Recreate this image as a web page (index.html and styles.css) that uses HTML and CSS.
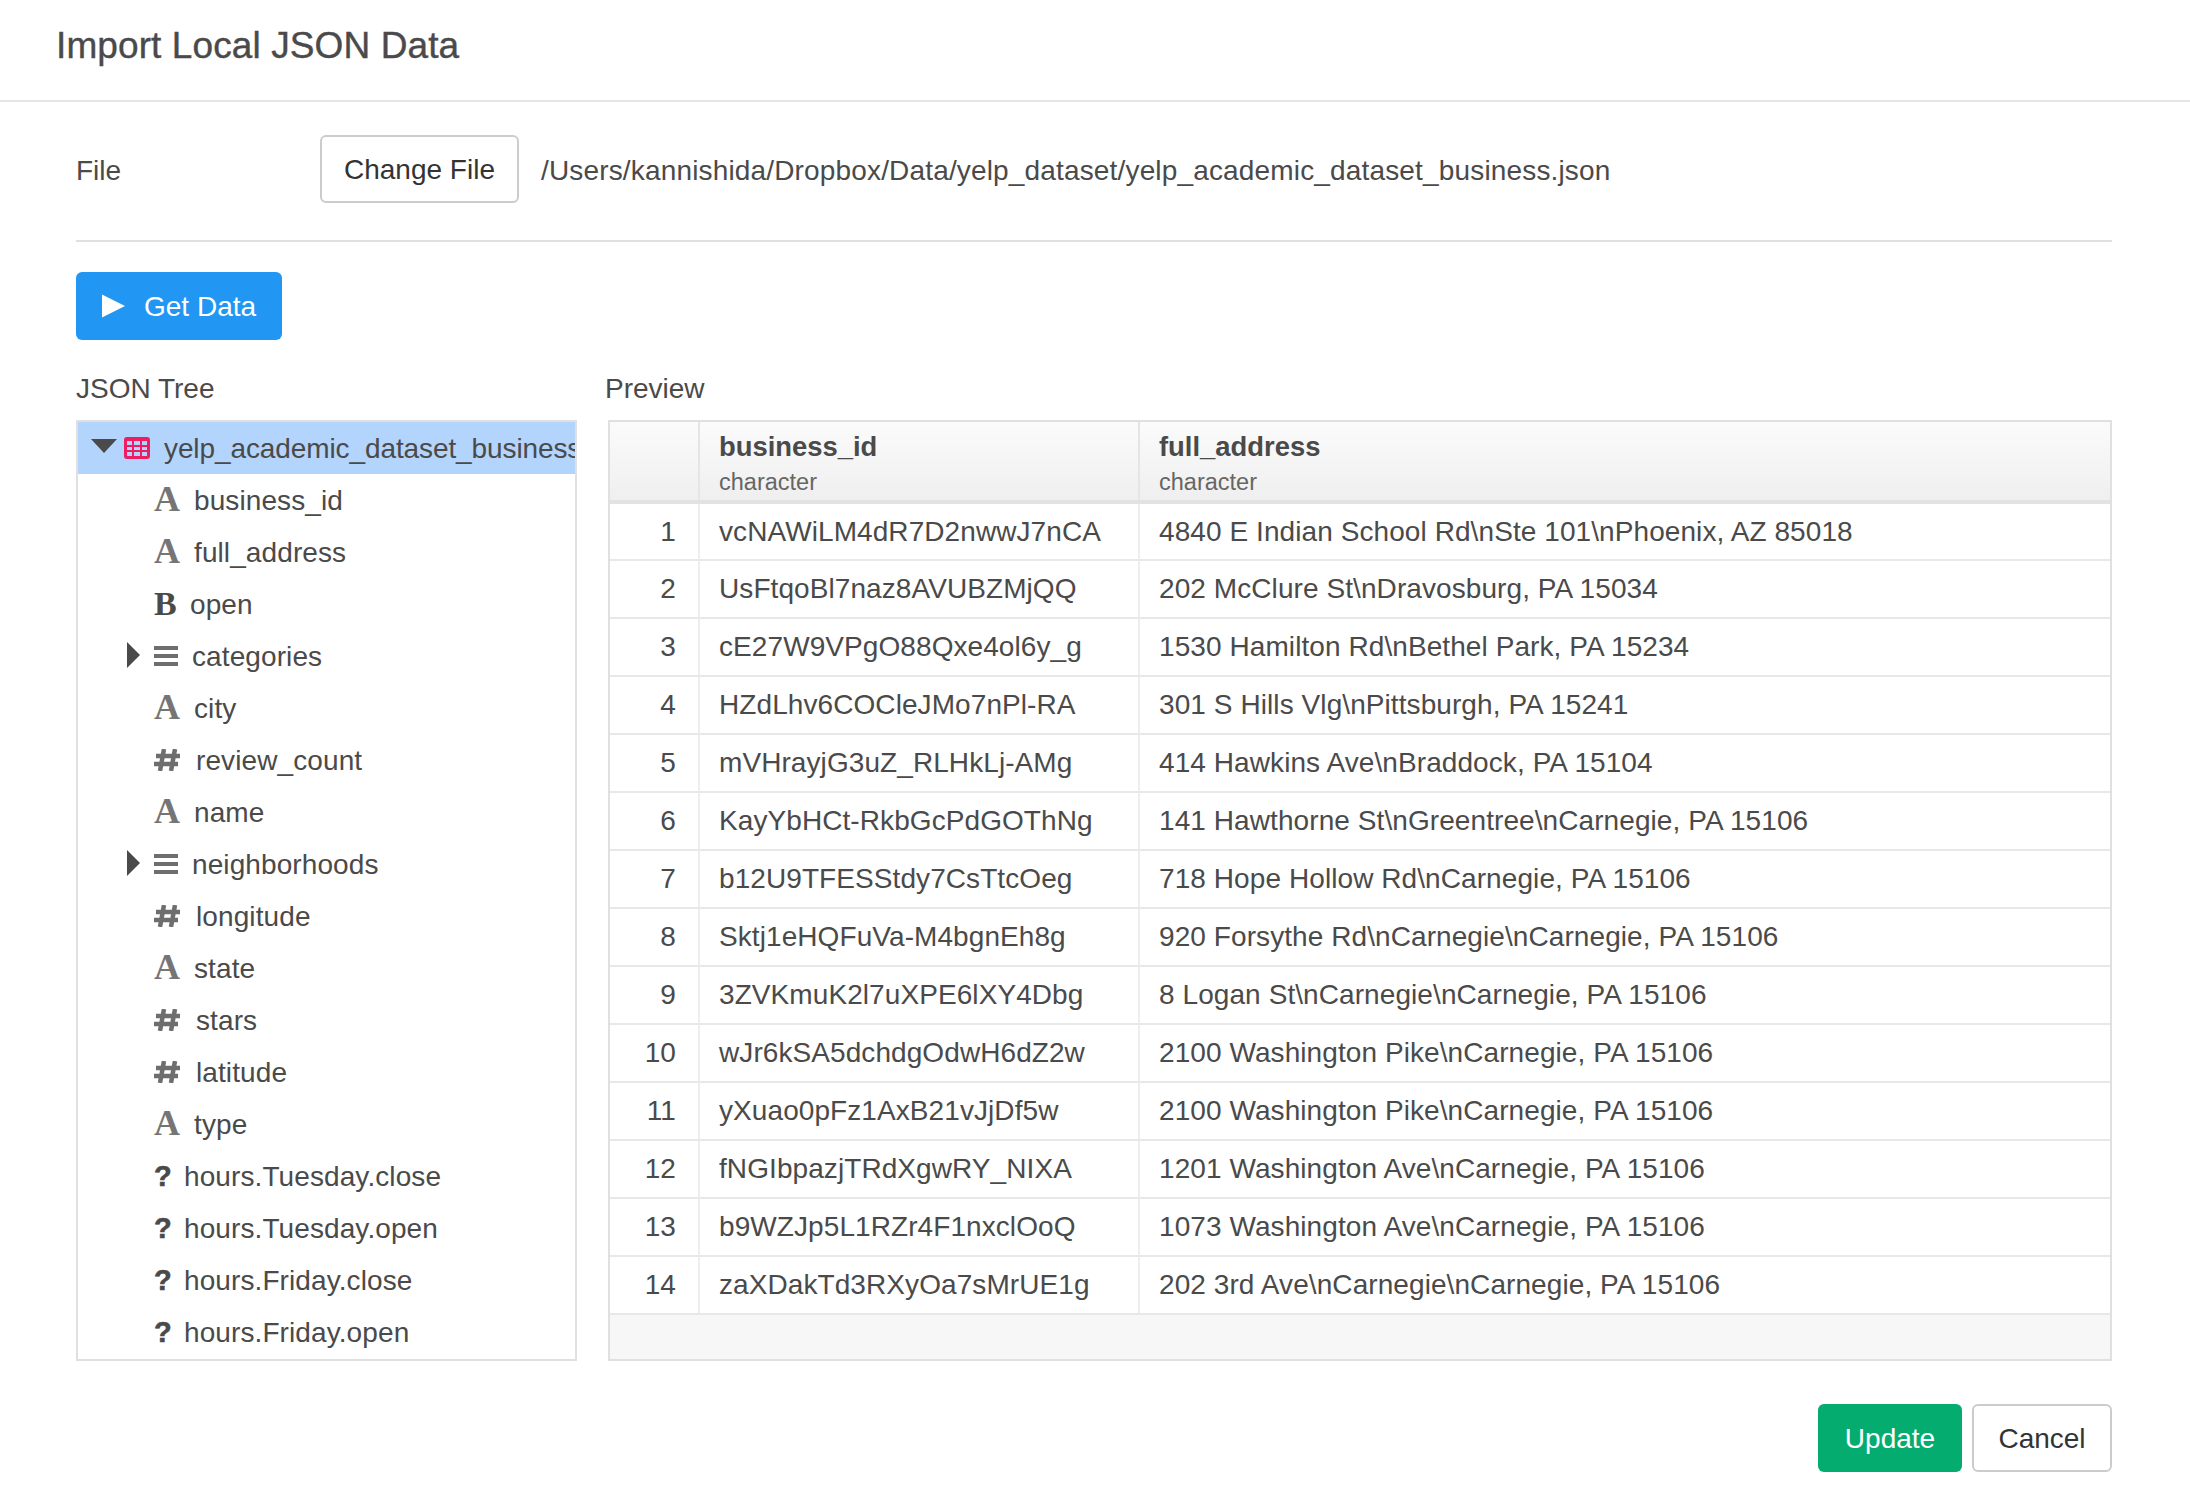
FILE: index.html
```html
<!DOCTYPE html>
<html lang="en">
<head>
<meta charset="utf-8">
<title>Import Local JSON Data</title>
<link rel="stylesheet" href="styles.css">
</head>
<body>
<header class="header"><h1 class="title">Import Local JSON Data</h1></header>
<main class="main">
  <section class="file-row">
    <span class="file-label">File</span>
    <button class="btn btn-default btn-file">Change File</button>
    <span class="file-path">/Users/kannishida/Dropbox/Data/yelp_dataset/yelp_academic_dataset_business.json</span>
  </section>
  <button class="btn btn-blue"><svg class="play" viewBox="0 0 24 24"><path d="M0 0L24 12L0 24Z"/></svg>Get Data</button>
  <section class="panes">
    <div class="tree-pane">
      <div class="pane-label">JSON Tree</div>
      <div class="tree">
        <div class="node node-root">
          <svg class="tri-down" viewBox="0 0 26 14"><path d="M0 0H26L13 14Z"/></svg>
          <svg class="table-icon" viewBox="0 0 26 22"><path fill-rule="evenodd" fill="#ee1c60" d="M3 0H23A3 3 0 0 1 26 3V19A3 3 0 0 1 23 22H3A3 3 0 0 1 0 19V3A3 3 0 0 1 3 0ZM3 4H8V8H3ZM10 4H16V8H10ZM18 4H23V8H18ZM3 10H8V13H3ZM10 10H16V13H10ZM18 10H23V13H18ZM3 15H8V19H3ZM10 15H16V19H10ZM18 15H23V19H18Z"/></svg>
          <span>yelp_academic_dataset_business</span>
        </div>
        <div class="node"><i class="ic ic-a">A</i><span>business_id</span></div>
        <div class="node"><i class="ic ic-a">A</i><span>full_address</span></div>
        <div class="node"><i class="ic ic-b">B</i><span>open</span></div>
        <div class="node node-parent"><svg class="tri-right" viewBox="0 0 13 26"><path d="M0 0L13 13L0 26Z"/></svg><svg class="list-icon" viewBox="0 0 24 20"><path d="M0 0H24V4H0ZM0 8H24V12H0ZM0 16H24V20H0Z"/></svg><span>categories</span></div>
        <div class="node"><i class="ic ic-a">A</i><span>city</span></div>
        <div class="node"><svg class="hash-icon" viewBox="0 0 26 22"><path d="M10 0L6 22M21 0L17 22M2 7H26M0 15H24"/></svg><span>review_count</span></div>
        <div class="node"><i class="ic ic-a">A</i><span>name</span></div>
        <div class="node node-parent"><svg class="tri-right" viewBox="0 0 13 26"><path d="M0 0L13 13L0 26Z"/></svg><svg class="list-icon" viewBox="0 0 24 20"><path d="M0 0H24V4H0ZM0 8H24V12H0ZM0 16H24V20H0Z"/></svg><span>neighborhoods</span></div>
        <div class="node"><svg class="hash-icon" viewBox="0 0 26 22"><path d="M10 0L6 22M21 0L17 22M2 7H26M0 15H24"/></svg><span>longitude</span></div>
        <div class="node"><i class="ic ic-a">A</i><span>state</span></div>
        <div class="node"><svg class="hash-icon" viewBox="0 0 26 22"><path d="M10 0L6 22M21 0L17 22M2 7H26M0 15H24"/></svg><span>stars</span></div>
        <div class="node"><svg class="hash-icon" viewBox="0 0 26 22"><path d="M10 0L6 22M21 0L17 22M2 7H26M0 15H24"/></svg><span>latitude</span></div>
        <div class="node"><i class="ic ic-a">A</i><span>type</span></div>
        <div class="node"><i class="ic ic-q">?</i><span>hours.Tuesday.close</span></div>
        <div class="node"><i class="ic ic-q">?</i><span>hours.Tuesday.open</span></div>
        <div class="node"><i class="ic ic-q">?</i><span>hours.Friday.close</span></div>
        <div class="node"><i class="ic ic-q">?</i><span>hours.Friday.open</span></div>
      </div>
    </div>
    <div class="preview-pane">
      <div class="pane-label">Preview</div>
      <div class="preview">
        <table class="grid">
          <colgroup><col class="c-num"><col class="c-id"><col></colgroup>
          <thead><tr><th></th><th><b>business_id</b><small>character</small></th><th><b>full_address</b><small>character</small></th></tr></thead>
          <tbody>
            <tr><td>1</td><td>vcNAWiLM4dR7D2nwwJ7nCA</td><td>4840 E Indian School Rd\nSte 101\nPhoenix, AZ 85018</td></tr>
            <tr><td>2</td><td>UsFtqoBl7naz8AVUBZMjQQ</td><td>202 McClure St\nDravosburg, PA 15034</td></tr>
            <tr><td>3</td><td>cE27W9VPgO88Qxe4ol6y_g</td><td>1530 Hamilton Rd\nBethel Park, PA 15234</td></tr>
            <tr><td>4</td><td>HZdLhv6COCleJMo7nPl-RA</td><td>301 S Hills Vlg\nPittsburgh, PA 15241</td></tr>
            <tr><td>5</td><td>mVHrayjG3uZ_RLHkLj-AMg</td><td>414 Hawkins Ave\nBraddock, PA 15104</td></tr>
            <tr><td>6</td><td>KayYbHCt-RkbGcPdGOThNg</td><td>141 Hawthorne St\nGreentree\nCarnegie, PA 15106</td></tr>
            <tr><td>7</td><td>b12U9TFESStdy7CsTtcOeg</td><td>718 Hope Hollow Rd\nCarnegie, PA 15106</td></tr>
            <tr><td>8</td><td>Sktj1eHQFuVa-M4bgnEh8g</td><td>920 Forsythe Rd\nCarnegie\nCarnegie, PA 15106</td></tr>
            <tr><td>9</td><td>3ZVKmuK2l7uXPE6lXY4Dbg</td><td>8 Logan St\nCarnegie\nCarnegie, PA 15106</td></tr>
            <tr><td>10</td><td>wJr6kSA5dchdgOdwH6dZ2w</td><td>2100 Washington Pike\nCarnegie, PA 15106</td></tr>
            <tr><td>11</td><td>yXuao0pFz1AxB21vJjDf5w</td><td>2100 Washington Pike\nCarnegie, PA 15106</td></tr>
            <tr><td>12</td><td>fNGIbpazjTRdXgwRY_NIXA</td><td>1201 Washington Ave\nCarnegie, PA 15106</td></tr>
            <tr><td>13</td><td>b9WZJp5L1RZr4F1nxclOoQ</td><td>1073 Washington Ave\nCarnegie, PA 15106</td></tr>
            <tr><td>14</td><td>zaXDakTd3RXyOa7sMrUE1g</td><td>202 3rd Ave\nCarnegie\nCarnegie, PA 15106</td></tr>
          </tbody>
        </table>
      </div>
    </div>
  </section>
  <footer class="actions">
    <button class="btn btn-green">Update</button>
    <button class="btn btn-default">Cancel</button>
  </footer>
</main>
</body>
</html>
```
FILE: styles.css
```css
* { box-sizing: border-box; }
html, body { margin: 0; padding: 0; background: #fff; }
body {
  width: 2190px;
  height: 1488px;
  overflow: hidden;
  font-family: "Liberation Sans", Arial, sans-serif;
  font-size: 28px;
  letter-spacing: 0.14px;
  color: #4a4a4a;
}
.header {
  height: 102px;
  border-bottom: 2px solid #e5e5e5;
  padding-left: 56px;
  display: flex;
  align-items: center;
}
.title { margin: 0 0 8px; font-size: 37px; letter-spacing: 0.1px; font-weight: 400; color: #4a4a4a; -webkit-text-stroke: 0.4px #4a4a4a; }
.main { padding: 0 78px 0 76px; }
.file-row {
  height: 140px;
  padding-bottom: 4px;
  border-bottom: 2px solid #e0e0e0;
  display: flex;
  align-items: center;
}
.file-label { width: 244px; padding-top: 3px; letter-spacing: 0; }
.file-path { margin-left: 22px; padding-top: 3px; letter-spacing: 0.16px; }
.btn {
  font-family: inherit;
  font-size: 28px;
  letter-spacing: 0;
  height: 68px;
  border-radius: 6px;
  border: 2px solid transparent;
  padding: 2px 0 0;
  display: inline-flex;
  align-items: center;
  justify-content: center;
}
.btn-default { background: #fff; border-color: #ccc; color: #333; }
.btn-file { width: 199px; }
.btn-blue { background: #2196f3; color: #fff; margin-top: 30px; width: 206px; padding-left: 24px; justify-content: flex-start; }
.btn-green { background: #04ad6f; color: #fff; width: 144px; }
.play { width: 23px; height: 24px; fill: #fff; margin: -2px 19px 0 0; }
.panes { display: flex; margin-top: 28px; gap: 31px; }
.tree-pane { width: 501px; letter-spacing: 0.1px; }
.preview-pane { flex: 1; min-width: 0; }
.pane-label { height: 52px; line-height: 42px; letter-spacing: 0; }
.preview-pane .pane-label { margin-left: -3px; }
.tree {
  height: 941px;
  border: 2px solid #e0e0e0;
  overflow: hidden;
  white-space: nowrap;
}
.node { height: 52px; display: flex; align-items: center; padding: 1px 0 0 76px; }
.node-root { background: #b3d4fc; padding-left: 13px; letter-spacing: -0.1px; }
.node-parent { padding-left: 49px; }
.tri-down { width: 26px; height: 14px; fill: #4a4a4a; margin: -6px 7px 0 0; flex: none; }
.table-icon { width: 26px; height: 22px; margin: -2px 14px 0 0; flex: none; }
.tri-right { width: 13px; height: 26px; fill: #4a4a4a; margin: -4px 14px 0 0; flex: none; }
.list-icon { width: 24px; height: 20px; fill: #6e6e6e; margin: -2px 14px 0 0; flex: none; }
.hash-icon { width: 26px; height: 22px; fill: none; stroke: #6e6e6e; stroke-width: 4.5; margin: -2px 16px 0 0; flex: none; }
.ic { font-style: normal; flex: none; display: block; letter-spacing: 0; }
.ic-a { font-family: "Liberation Serif", serif; font-weight: 700; font-size: 36px; line-height: 36px; width: 26px; margin: -4px 14px 0 0; color: #757575; }
.ic-b { font-family: "Liberation Serif", serif; font-weight: 700; font-size: 34px; line-height: 36px; width: 23px; margin: -2px 13px 0 0; color: #4a4a4a; }
.ic-q { font-weight: 700; font-size: 29px; line-height: 36px; width: 16px; margin: -2px 14px 0 0; color: #4a4a4a; -webkit-text-stroke: 0.6px #4a4a4a; }
.preview {
  height: 941px;
  border: 2px solid #e0e0e0;
  background: #f7f7f7;
  overflow: hidden;
}
.grid { width: 100%; border-collapse: collapse; table-layout: fixed; background: #fff; letter-spacing: 0.08px; }
.c-num { width: 89px; }
.c-id { width: 440px; }
.grid th {
  height: 80px;
  padding: 0 0 0 19px;
  text-align: left;
  vertical-align: top;
  font-weight: 400;
  background: linear-gradient(#fbfbfb, #efefef);
  border-left: 2px solid #e5e5e5;
  border-bottom: 4px solid #e2e2e2;
}
.grid th:first-child { border-left: 0; }
.grid th b { display: block; font-size: 27.4px; letter-spacing: 0; font-weight: 700; line-height: 30px; margin-top: 10px; }
.grid th small { display: block; font-size: 23.5px; letter-spacing: 0; line-height: 28px; margin-top: 6px; color: #666; }
.grid td {
  height: 58px;
  padding: 0 0 0 19px;
  border-left: 2px solid #eee;
  border-bottom: 2px solid #e8e8e8;
  white-space: nowrap;
  overflow: hidden;
}
.grid td:first-child { border-left: 0; text-align: right; padding: 0 22px 0 0; }
.actions { display: flex; justify-content: flex-end; gap: 10px; margin-top: 43px; }
.actions .btn-default { width: 140px; }
```
